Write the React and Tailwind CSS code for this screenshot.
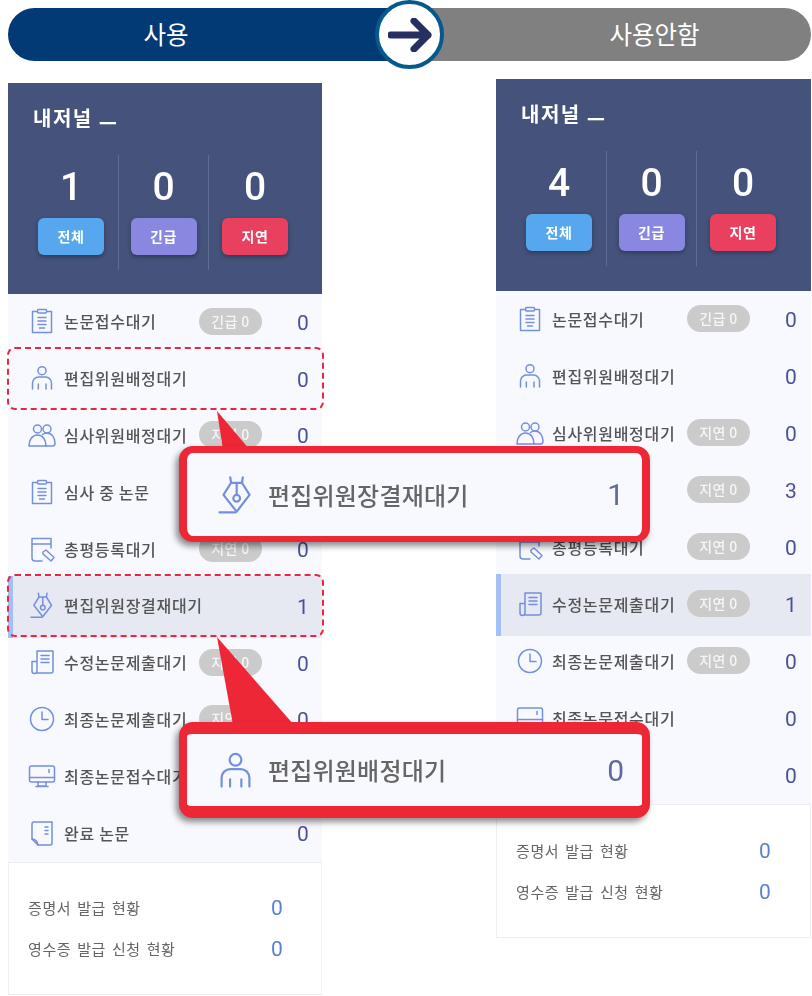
import React from 'react';

const FONT = { fontFamily: '"Noto Sans CJK KR", "Noto Sans", sans-serif' };

// list icons, all on a 28x28 box
const Icon = ({ name, className = 'w-7 h-7' }) => {
  const shapes = {
    clipboard: (
      <>
        <path d="M9 4.500H4.500v21h19v-21H19" />
        <rect x="9.500" y="2.500" width="9" height="3.500" rx="1" />
        <path d="M10 10.500h8M10 14h8M10 17.500h8M11.500 21h5" />
      </>
    ),
    person: (
      <>
        <circle cx="14" cy="6.700" r="4" />
        <path d="M4.500 25v-6a6 6 0 0 1 6-6h7a6 6 0 0 1 6 6v6" />
        <path d="M10.300 20v5M18 20v5" />
      </>
    ),
    people: (
      <>
        <circle cx="9.500" cy="8" r="4" />
        <circle cx="19" cy="8" r="4" />
        <path d="M1 25c0-6 3-11 8.500-11s8.500 5 8.500 11z" />
        <path d="M14.500 13.500c1.300-1 2.800-1.500 4.500-1.500 5 0 8 5 8 10 0 2-1 3-2.500 3H18" />
      </>
    ),
    edit: (
      <>
        <path d="M14 26H7a3 3 0 0 1-3-3V3.500h19V13" />
        <path d="M4 9h19" />
        <path d="M15 17l3-2 8 7.500-3 3.500-8-7z" />
      </>
    ),
    nib: (
      <>
        <path d="M10.400 2.300L11 6 5.800 14.300l9 11.400 8.800-11.400L18.400 6l.6-3.700" />
        <path d="M11 6h7.400M14.800 6v8.300" />
        <circle cx="14.800" cy="16.600" r="2.300" />
        <path d="M3 26.200h11" />
      </>
    ),
    doc: (
      <>
        <path d="M8.500 25H23a2 2 0 0 0 2-2V3H9v20a2.500 2.500 0 0 1-5 0v-9.500h5" />
        <path d="M13 7.500h8M13 11h8M13 14.500h8" />
      </>
    ),
    clock: (
      <>
        <circle cx="14" cy="14" r="11.500" />
        <path d="M14 7v7.500h6" />
      </>
    ),
    monitor: (
      <>
        <rect x="1.500" y="4" width="25" height="16" rx="2" />
        <path d="M1.500 15.500h25M10 20v4h8v-4M8 24.500h12M21 7.500v3" />
      </>
    ),
    note: (
      <>
        <path d="M10 26h12a2 2 0 0 0 2-2V3H6a2 2 0 0 0-2 2v15c3 0 6 3 6 6z" />
        <path d="M4 20l6 6" />
        <path d="M17 8h3M17 11.500h3M17 15h3" />
      </>
    ),
  };
  return (
    <svg viewBox="0 0 28 28" fill="none" stroke="#7490dc" strokeWidth="1.500" strokeLinecap="round" strokeLinejoin="round" className={`${className} shrink-0`}>
      {shapes[name]}
    </svg>
  );
};

const Row = ({ icon, label, badge, count, selected, outlined, rowClass }) => (
  <div className={`relative flex items-center pl-5 pb-[2px] ${rowClass}`}>
    {selected && <div className="absolute inset-x-0 -top-[2px] -bottom-[3px] bg-[#e6e9f1] border-l-[5px] border-[#a2bff8]" />}
    <div className="relative flex items-center gap-2 w-full">
      <Icon name={icon} />
      <span className="text-[16px] tracking-[0.7px] font-medium text-[#555555] whitespace-nowrap leading-none">{label}</span>
      {badge && (
        <span className="absolute left-[171px] w-[63px] h-[27px] rounded-full bg-[#cbcbcb] text-[#f6f6f6] text-[14px] tracking-[0.4px] font-medium flex items-center justify-center">
          {badge}
        </span>
      )}
      <span className="absolute left-[260px] mt-[4px] w-[30px] text-center text-[21px] text-[#4b5196] leading-none" style={{ fontFamily: 'Roboto, sans-serif' }}>
        {count}
      </span>
    </div>
    {outlined && <div className="absolute -left-px -right-[2px] -top-[4px] -bottom-[2px] border-2 border-dashed border-[#e8283c] rounded-lg z-10" />}
  </div>
);

const Stat = ({ value, label, color, divider }) => (
  <div className={`flex flex-col items-center h-[115px] ${divider}`}>
    <span className="text-[39px] font-medium text-white leading-none mt-[13px] h-[50px]" style={{ fontFamily: 'Roboto, sans-serif' }}>{value}</span>
    <span className={`w-[66px] h-[37px] rounded-md ${color} text-white text-[14px] tracking-[0.5px] font-bold flex items-center justify-center shadow-[0_2px_4px_rgba(0,0,0,0.3)]`}>
      {label}
    </span>
  </div>
);

const Panel = ({ total, rows, className, headerClass, footerClass, rowClass }) => (
  <div className={`blur-[0.4px] ${className}`}>
    <div className={`${headerClass} bg-[#44527c] pt-[21px]`}>
      <div className="h-[28px] pl-[25px] text-[20px] tracking-[1.5px] font-bold text-white leading-[28px]">
        내저널 <span className="align-[-3px] font-black">—</span>
      </div>
      <div className="grid grid-cols-[94px_90px_93px] pl-4 mt-[23px]">
        <Stat value={total} label="전체" color="bg-[#56a7ee]" />
        <Stat value="0" label="긴급" color="bg-[#8a87e0]" divider="border-l border-[#5f6c95]" />
        <Stat value="0" label="지연" color="bg-[#e9405f]" divider="border-l border-[#5f6c95]" />
      </div>
    </div>
    <div className="bg-[#f8f9fe]">
      {rows.map((r) => <Row key={r.label} rowClass={rowClass} {...r} />)}
    </div>
    <div className={`${footerClass} bg-white border border-[#eeeeee] pl-[19px] text-[15px] tracking-[0.6px] [word-spacing:2px] text-[#666666]`}>
      {['증명서 발급 현황', '영수증 발급 신청 현황'].map((t) => (
        <div key={t} className="relative h-[41px] flex items-center">
          {t}
          <span className="absolute left-[243px] text-[21px] text-[#5b80d2]" style={{ fontFamily: 'Roboto, sans-serif' }}>0</span>
        </div>
      ))}
    </div>
  </div>
);

const Callout = ({ icon, label, count, className }) => (
  <div className={`absolute left-[179px] w-[471px] rounded-[14px] bg-[#f8f9fe] border-[#ee2737] border-x-[8px] flex items-center pl-[28px] z-20 shadow-[-3px_4px_6px_rgba(0,0,0,0.45)] ${className}`}>
    <Icon name={icon} className="w-[41px] h-[41px]" />
    <span className="ml-3 text-[24px] tracking-[0.2px] font-medium text-[#666666] whitespace-nowrap blur-[0.5px]">{label}</span>
    <span className="absolute right-[18px] text-[30px] text-[#616a9e] blur-[0.4px]" style={{ fontFamily: 'Roboto, sans-serif' }}>{count}</span>
  </div>
);

const leftRows = [
  { icon: 'clipboard', label: '논문접수대기', badge: '긴급 0', count: 0 },
  { icon: 'person', label: '편집위원배정대기', count: 0, outlined: true },
  { icon: 'people', label: '심사위원배정대기', badge: '지연 0', count: 0 },
  { icon: 'clipboard', label: '심사 중 논문', badge: '지연 0', count: 0 },
  { icon: 'edit', label: '총평등록대기', badge: '지연 0', count: 0 },
  { icon: 'nib', label: '편집위원장결재대기', count: 1, selected: true, outlined: true },
  { icon: 'doc', label: '수정논문제출대기', badge: '지연 0', count: 0 },
  { icon: 'clock', label: '최종논문제출대기', badge: '지연 0', count: 0 },
  { icon: 'monitor', label: '최종논문접수대기', count: 0 },
  { icon: 'note', label: '완료 논문', count: 0 },
];

const rightRows = [
  { icon: 'clipboard', label: '논문접수대기', badge: '긴급 0', count: 0 },
  { icon: 'person', label: '편집위원배정대기', count: 0 },
  { icon: 'people', label: '심사위원배정대기', badge: '지연 0', count: 0 },
  { icon: 'clipboard', label: '심사 중 논문', badge: '지연 0', count: 3 },
  { icon: 'edit', label: '총평등록대기', badge: '지연 0', count: 0 },
  { icon: 'doc', label: '수정논문제출대기', badge: '지연 0', count: 1, selected: true },
  { icon: 'clock', label: '최종논문제출대기', badge: '지연 0', count: 0 },
  { icon: 'monitor', label: '최종논문접수대기', count: 0 },
  { icon: 'note', label: '완료 논문', count: 0 },
];

export default function App() {
  return (
    <div className="relative w-[812px] h-[996px] overflow-hidden bg-white pl-2 pr-px pt-2" style={FONT}>
      {/* switch bar */}
      <div className="flex h-[53px] text-[24.5px] text-white">
        <div className="w-[402px] rounded-l-full bg-[#023a75] flex items-center justify-center pr-[86px]">사용</div>
        <div className="flex-1 rounded-r-full bg-[#808080] flex items-center justify-center pl-[88px]">사용안함</div>
      </div>
      <div className="absolute left-[375px] top-0 w-[69px] h-[69px] rounded-full bg-white border-[4px] border-[#05598c] flex items-center justify-center">
        <svg viewBox="0 0 44 34" className="w-[44px] h-[34px]" fill="none" stroke="#262f62" strokeWidth="7" strokeLinecap="round" strokeLinejoin="round">
          <path d="M3 17h37M26 3l14 14-14 14" />
        </svg>
      </div>

      {/* panels */}
      <div className="flex justify-between items-start">
        <Panel total="1" rows={leftRows} className="w-[314px] mt-[22px]" headerClass="h-[211px]" footerClass="h-[133px] pt-[25px]" rowClass="h-[56.8px]" />
        <Panel total="4" rows={rightRows} className="w-[315px] mt-[18px]" headerClass="h-[212px]" footerClass="h-[134px] pt-[26px]" rowClass="h-[57px]" />
      </div>

      {/* callouts */}
      <svg className="absolute left-[210px] top-[405px] w-[100px] h-[330px] z-20" viewBox="0 0 100 330" fill="#ee2737">
        <polygon points="7,6 13,45 40,45" />
        <polygon points="7,232 23,320 84,320" />
      </svg>
      <Callout icon="nib" label="편집위원장결재대기" count="1" className="top-[446px] h-[96px] border-t-[7px] border-b-[6px]" />
      <Callout icon="person" label="편집위원배정대기" count="0" className="top-[722px] h-[96px] border-y-[12px]" />
    </div>
  );
}
